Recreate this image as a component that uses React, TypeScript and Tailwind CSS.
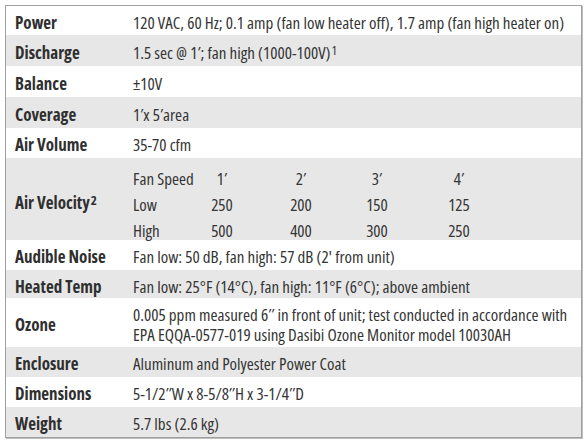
type Row = { label: React.ReactNode; value: React.ReactNode; h: string; shade?: boolean };

const cols = ["Fan Speed", "1′", "2′", "3′", "4′"];
const velocity = [
  ["Low", "250", "200", "150", "125"],
  ["High", "500", "400", "300", "250"],
];

function AirVelocity() {
  return (
    <div className="grid grid-cols-[50px_78px_80px_72px_92px] auto-rows-[26px] items-center pt-[4px]">
      {[cols, ...velocity].map((r, i) =>
        r.map((c, j) => (
          <span key={i + "-" + j} className={j === 0 ? "whitespace-nowrap" : "text-center"}>
            {c}
          </span>
        ))
      )}
    </div>
  );
}

const rows: Row[] = [
  { label: "Power", h: "h-[29px]", value: "120 VAC, 60 Hz; 0.1 amp (fan low heater off), 1.7 amp (fan high heater on)" },
  {
    label: "Discharge",
    h: "h-[31px]",
    shade: true,
    value: (
      <>
        1.5 sec @ 1′; fan high (1000-100V)<sup className="text-[13px] ml-[1px] relative -top-[3px]">1</sup>
      </>
    ),
  },
  { label: "Balance", h: "h-[31px]", value: "±10V" },
  { label: "Coverage", h: "h-[31px]", shade: true, value: "1′x 5′area" },
  { label: "Air Volume", h: "h-[30px]", value: "35-70 cfm" },
  {
    label: (
      <>
        Air Velocity<sup className="text-[13px] ml-[1px] relative -top-[3px]">2</sup>
      </>
    ),
    h: "h-[82px]",
    shade: true,
    value: <AirVelocity />,
  },
  { label: "Audible Noise", h: "h-[30px]", value: "Fan low: 50 dB, fan high: 57 dB (2' from unit)" },
  { label: "Heated Temp", h: "h-[28px]", shade: true, value: "Fan low: 25°F (14°C), fan high: 11°F (6°C); above ambient" },
  {
    label: "Ozone",
    h: "h-[49px]",
    value: (
      <span className="block leading-[20px]">
        0.005 ppm measured 6″ in front of unit; test conducted in accordance with
        <br />
        EPA EQQA-0577-019 using Dasibi Ozone Monitor model 10030AH
      </span>
    ),
  },
  { label: "Enclosure", h: "h-[30px]", shade: true, value: "Aluminum and Polyester Power Coat" },
  { label: "Dimensions", h: "h-[30px]", value: "5-1/2″W x 8-5/8″H x 3-1/4″D" },
  { label: "Weight", h: "h-[30px]", shade: true, value: "5.7 lbs (2.6 kg)" },
];

export default function App() {
  return (
    <div className="min-h-[443px] bg-white pt-[5px] pl-[5px]">
      <div className="w-[577px] border border-[#a0a0a0] shadow-[1px_1px_0_#bdbdbd] font-['Open_Sans',sans-serif] [font-stretch:75%] text-[17px] text-[#353535]">
        {rows.map((r, i) => (
          <div
            key={i}
            className={`grid grid-cols-[127px_1fr] ${r.h} ${r.shade ? "bg-[#e7e7e7]" : "bg-white"}`}
          >
            <div className="flex items-center pl-[9px] pt-[4px] font-bold text-[#2f2f2f] whitespace-nowrap">{r.label}</div>
            <div className="flex items-center pt-[4px] whitespace-nowrap">{r.value}</div>
          </div>
        ))}
      </div>
    </div>
  );
}
